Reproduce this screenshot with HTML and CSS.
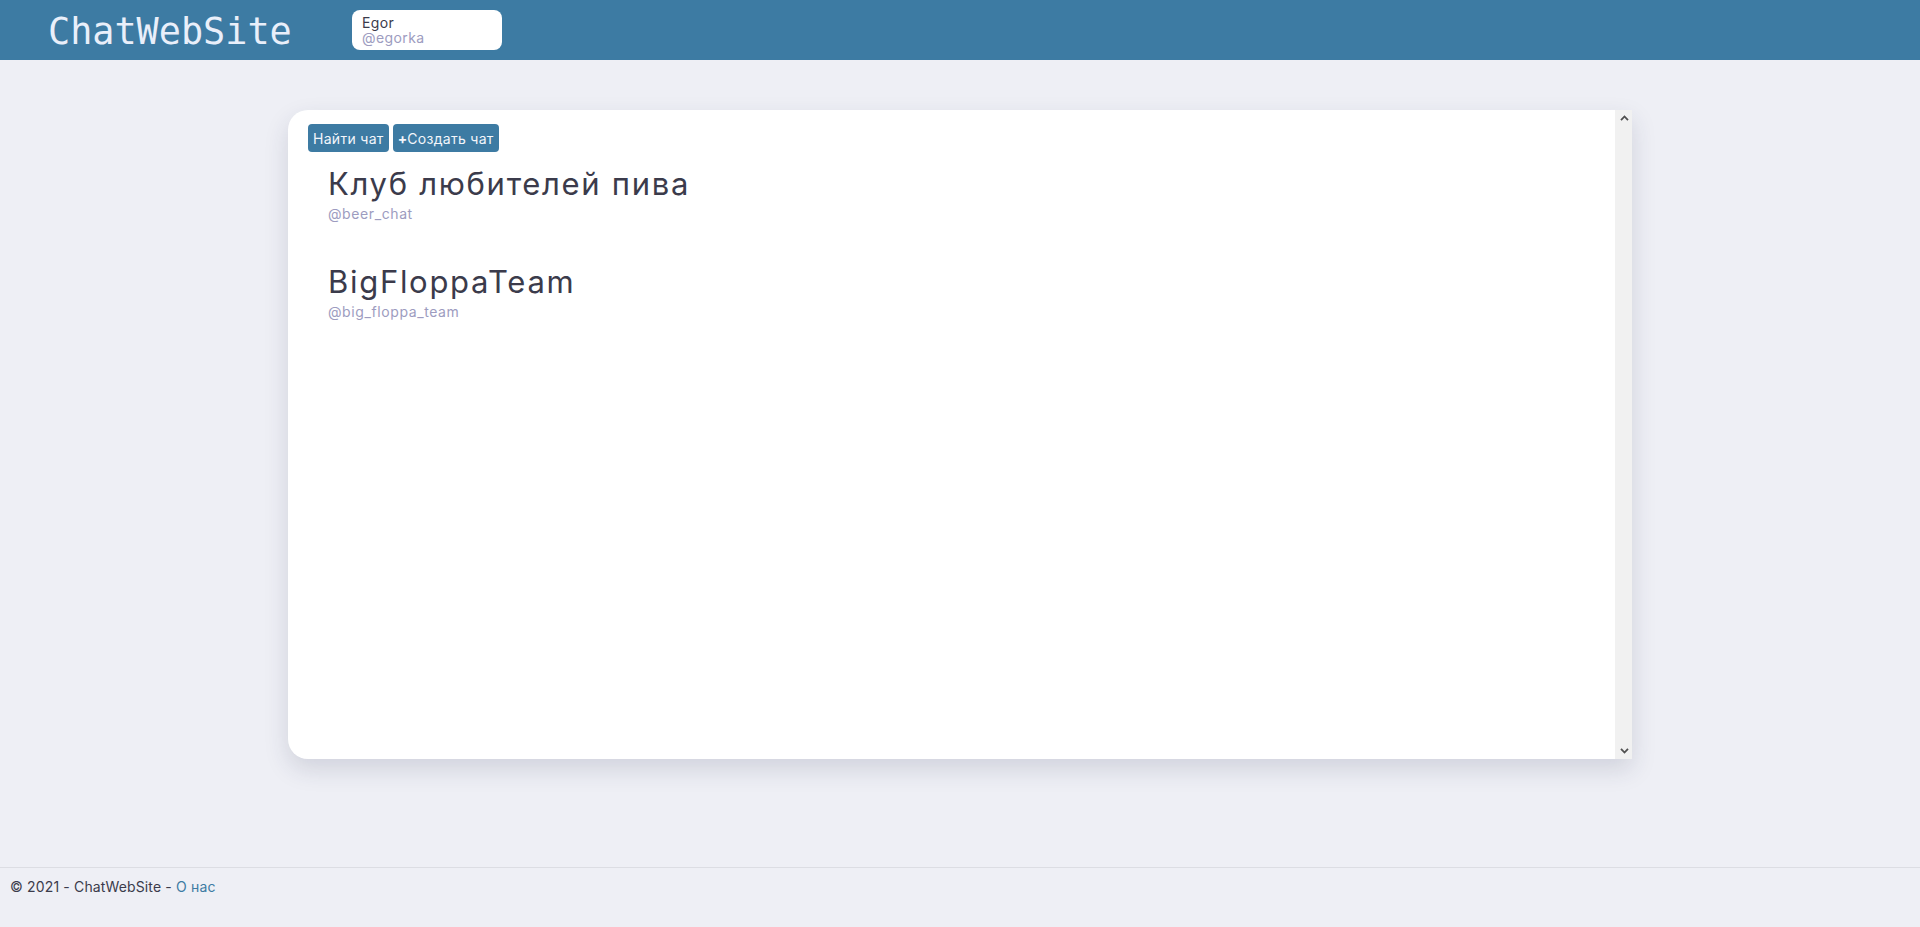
FILE: index.html
```html
<!DOCTYPE html>
<html lang="ru">
<head>
<meta charset="utf-8">
<title>ChatWebSite</title>
<link rel="stylesheet" href="styles.css">
</head>
<body>
<header class="topbar">
  <a class="logo" href="#">ChatWebSite</a>
  <div class="user-box">
    <div class="user-name">Egor</div>
    <div class="user-handle">@egorka</div>
  </div>
</header>
<main class="main">
  <section class="card">
    <div class="card-body">
      <div class="actions">
        <button class="btn">Найти чат</button>
        <button class="btn"><b>+</b>Создать чат</button>
      </div>
      <div class="chat-list">
        <a class="chat" href="#">
          <div class="chat-title">Клуб любителей пива</div>
          <div class="chat-handle">@beer_chat</div>
        </a>
        <a class="chat" href="#">
          <div class="chat-title">BigFloppaTeam</div>
          <div class="chat-handle">@big_floppa_team</div>
        </a>
      </div>
    </div>
    <div class="scrollbar" aria-hidden="true">
      <svg class="arrow" width="9" height="6" viewBox="0 0 9 6"><polyline points="1,5.2 4.5,1.5 8,5.2" fill="none" stroke="#505050" stroke-width="1.8"/></svg>
      <svg class="arrow" width="9" height="6" viewBox="0 0 9 6"><polyline points="1,0.8 4.5,4.5 8,0.8" fill="none" stroke="#505050" stroke-width="1.8"/></svg>
    </div>
  </section>
</main>
<footer class="footer">
  <span>© 2021 - ChatWebSite - </span><a class="footer-link" href="#">О нас</a>
</footer>
</body>
</html>
```
FILE: styles.css
```css
* { box-sizing: border-box; }
html, body { margin: 0; padding: 0; }
body {
  min-height: 100vh;
  display: flex;
  flex-direction: column;
  background: #eeeff5;
  font-family: Inter, "Open Sans", sans-serif;
  color: #3b3b4b;
}
.topbar {
  height: 60px;
  background: #3d7ba3;
  display: flex;
  align-items: center;
  padding-left: 48px;
}
.logo {
  font-family: "DejaVu Sans Mono", monospace;
  font-size: 36.8px;
  line-height: 44px;
  padding-top: 3px;
  color: #e9effa;
  text-decoration: none;
  width: 304px;
}
.user-box {
  width: 150px;
  height: 40px;
  background: #ffffff;
  border-radius: 8px;
  padding: 5px 10px;
  font-size: 14px;
  line-height: 15px;
  letter-spacing: 0.4px;
}
.user-name { color: #3b3b4b; }
.user-handle { color: #9d9cc0; }
.main {
  flex: 1;
  padding-top: 50px;
  display: flex;
  justify-content: center;
  align-items: flex-start;
}
.card {
  width: 70vw;
  height: 70vh;
  display: flex;
  background: #ffffff;
  border-radius: 20px 0 0 20px;
  overflow: hidden;
  box-shadow: 0 10px 24px rgba(40, 45, 80, 0.15);
}
.card-body {
  flex: 1;
  padding: 14px 20px;
}
.scrollbar {
  width: 17px;
  background: #f1f1f1;
  display: flex;
  flex-direction: column;
  justify-content: space-between;
  align-items: center;
  padding: 5px 0 5px 1px;
}
.arrow { display: block; }
.actions { display: flex; gap: 4px; }
.btn {
  height: 28px;
  border: none;
  border-radius: 4px;
  background: #3d7ba3;
  color: #f3f6fb;
  font-family: Inter, "Open Sans", sans-serif;
  font-size: 14px;
  letter-spacing: 0.3px;
  padding: 0 5px;
  cursor: pointer;
}
.btn b { font-weight: 700; letter-spacing: 0; }
.chat-list { padding-left: 20px; padding-top: 13px; }
.chat {
  display: block;
  text-decoration: none;
  margin-bottom: 38px;
}
.chat-title {
  font-size: 31px;
  line-height: 38px;
  letter-spacing: 1.7px;
  color: #3b3b4b;
}
.chat-handle {
  font-size: 14px;
  line-height: 22px;
  letter-spacing: 0.6px;
  color: #9d9cc0;
}
.footer {
  height: 60px;
  border-top: 1px solid #dcdde3;
  padding-left: 10px;
  font-size: 14px;
  line-height: 37px;
  letter-spacing: 0.15px;
  color: #3b3b4b;
}
.footer-link { color: #3d7ba3; text-decoration: none; }
```
